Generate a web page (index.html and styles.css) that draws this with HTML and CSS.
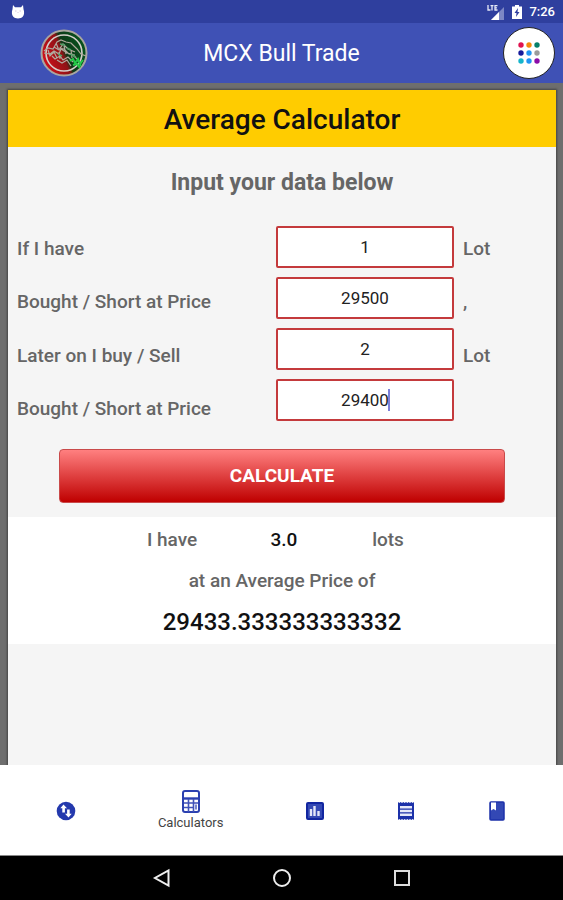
FILE: index.html
```html
<!DOCTYPE html>
<html lang="en">
<head>
<meta charset="utf-8">
<meta name="viewport" content="width=device-width, initial-scale=1">
<title>MCX Bull Trade</title>
<link rel="stylesheet" href="styles.css">
</head>
<body>
<div class="status-bar">
  <svg class="status-app" width="14" height="14" viewBox="0 0 14 14" aria-hidden="true">
    <path d="M2 0l2 2.200h6L12 0l.5 4.200c1 2.800.8 5.800-.8 7.600-1 1.200-2.600 1.700-4.700 1.700s-3.700-.5-4.700-1.700C.7 10 .5 7 1.500 4.200z" fill="#fff"/>
    <path d="M4 6h1.500M8.500 6H10M6.500 7.500h1" stroke="#d6c6df" stroke-width="1"/>
  </svg>
  <div class="status-icons">
    <svg width="18" height="16" viewBox="0 0 18 16" aria-hidden="true">
      <path d="M17 3v13H4z" fill="#7d87c4"/>
      <path d="M12 8v8H4z" fill="#fff"/>
      <path d="M1 1v5h2.500M3.500 1.600h3M5 1.600V6.500M10.500 1.600H8V6h2.500M8 3.800h2" fill="none" stroke="#e6e9f8" stroke-width="1.300"/>
    </svg>
    <svg width="10" height="14" viewBox="0 0 10 14" aria-hidden="true">
      <path d="M3 0h4v1.500h3V14H0V1.500h3z" fill="#fff"/>
      <path d="M6 3L2.500 8h2L4 12l3.500-5h-2z" fill="#303f9f"/>
    </svg>
    <span>7:26</span>
  </div>
</div>
<header class="app-bar">
  <svg class="logo" width="48" height="48" viewBox="0 0 48 48" role="img" aria-label="MCX Bull Trade logo">
    <defs>
      <linearGradient id="coin" x1="0" y1=".7" x2="1" y2=".3">
        <stop offset="0" stop-color="#d8101a"/>
        <stop offset=".46" stop-color="#8e1216"/>
        <stop offset=".54" stop-color="#0c3a18"/>
        <stop offset="1" stop-color="#06551c"/>
      </linearGradient>
    </defs>
    <circle cx="24" cy="24" r="22.500" fill="url(#coin)" stroke="#a9a6a0" stroke-width="2"/>
    <circle cx="24" cy="24" r="18" fill="none" stroke="#d5cfca" stroke-width="1.600"/>
    <path d="M4 22l4-3 5 1 4-7 4-2 5 2 5 1 6 6 4 5 5 2M4 24l6 1 4-3 5 3 2-5 6 4 5 1 5 5M12 27l3 3 5-3 3 4 5-3 5 5M16 14l2 5 6 1 5 5 6 1M14 18l5 3 4-6 5 5 7 3M17 31l5 3 5-3 4 6M8 21l2 6 4-4 3 6M19 23l1 7M24 17l2 8M31 21l1 8" fill="none" stroke="#b0a89c" stroke-width="1.200"/>
    <path d="M30 32l3-2 2 4 3-4 2 5 3-4M33 36l4-1 3 4M38 31l3 6" fill="none" stroke="#25c848" stroke-width="2"/>
    <path d="M18 25l4 2M20 15l5 1M30 25l6 3M27 19l4 2" stroke="#52a067" stroke-width="1.500"/>
  </svg>
  <h1 class="app-name">MCX Bull Trade</h1>
  <button class="apps-button" type="button" aria-label="All tools">
    <svg width="22" height="22" viewBox="0 0 22 22" aria-hidden="true">
      <circle cx="3" cy="3" r="2.700" fill="#e0124f"/><circle cx="11" cy="3" r="2.700" fill="#f58a0b"/><circle cx="19" cy="3" r="2.700" fill="#06806a"/>
      <circle cx="3" cy="11" r="2.700" fill="#171b9b"/><circle cx="11" cy="11" r="2.700" fill="#2196f3"/><circle cx="19" cy="11" r="2.700" fill="#9b9b9b"/>
      <circle cx="3" cy="19" r="2.700" fill="#15b5cb"/><circle cx="11" cy="19" r="2.700" fill="#2196f3"/><circle cx="19" cy="19" r="2.700" fill="#8b0ca8"/>
    </svg>
  </button>
</header>
<main class="page">
  <section class="card">
    <h2 class="card-title">Average Calculator</h2>
    <form class="form">
      <p class="hint">Input your data below</p>
      <div class="fields">
        <div class="labels">
          <label for="lots-held">If I have</label>
          <label for="price-held">Bought / Short at Price</label>
          <label for="lots-new">Later on I buy / Sell</label>
          <label for="price-new">Bought / Short at Price</label>
        </div>
        <div class="inputs">
          <input id="lots-held" type="text" inputmode="numeric" value="1">
          <input id="price-held" type="text" inputmode="numeric" value="29500">
          <input id="lots-new" type="text" inputmode="numeric" value="2">
          <div class="active-field">
            <input id="price-new" type="text" inputmode="numeric" value="29400">
            <span class="caret"></span>
          </div>
        </div>
        <div class="labels">
          <span>Lot</span>
          <span>,</span>
          <span>Lot</span>
          <span class="no-unit"></span>
        </div>
      </div>
      <button class="calculate" type="button">CALCULATE</button>
    </form>
    <div class="result">
      <div class="result-lots">
        <span>I have</span>
        <output class="strong">3.0</output>
        <span>lots</span>
      </div>
      <p class="result-text">at an Average Price of</p>
      <output class="result-price">29433.333333333332</output>
    </div>
  </section>
</main>
<nav class="tabs">
  <a class="tab" href="#rates" aria-label="Rates">
    <svg width="20" height="20" viewBox="0 0 20 20" aria-hidden="true">
      <circle cx="10" cy="10" r="9.300" fill="#2439ad"/>
      <path d="M7.500 3.500L4.300 7.200h2v4.300h2.600V7.200H11zM12.500 16.500l3.200-3.700h-2V8.500h-2.600v4.300H9z" fill="#fff"/>
    </svg>
  </a>
  <a class="tab tab-active" href="#calculators">
    <svg width="18" height="23" viewBox="0 0 18 23" aria-hidden="true">
      <rect x="1" y="1" width="16" height="21" rx="2" fill="#fff" stroke="#2b40b0" stroke-width="2"/>
      <path d="M2 8.500h14" stroke="#2b40b0" stroke-width="2.400"/>
      <path d="M2 13h14M2 17.500h9M6.500 9v13M11.500 9v13" stroke="#4052b8" stroke-width="1.600"/>
      <path d="M14 14.500v5" stroke="#4052b8" stroke-width="1.400"/>
    </svg>
    <span>Calculators</span>
  </a>
  <a class="tab" href="#charts" aria-label="Charts">
    <svg width="18" height="18" viewBox="0 0 18 18" aria-hidden="true">
      <rect x="1" y="1" width="16" height="16" rx="1" fill="#3449b4" stroke="#1226a0" stroke-width="2"/>
      <path d="M5 7v7M8.500 4v10M12.500 9v5" stroke="#e4e7f8" stroke-width="2.400"/>
    </svg>
  </a>
  <a class="tab" href="#reports" aria-label="Reports">
    <svg width="18" height="18" viewBox="0 0 18 18" aria-hidden="true">
      <path d="M1 0l1.300 1L3.700 0 5 1l1.300-1 1.400 1L9 0l1.300 1 1.400-1L13 1l1.300-1 1.400 1L17 0v18l-1.300-1-1.400 1-1.300-1-1.300 1-1.400-1L9 18l-1.300-1-1.400 1L5 17l-1.300 1-1.400-1L1 18z" fill="#1c31a9"/>
      <path d="M3 5.200h12M3 9h12M3 12.800h12" stroke="#e4e7f8" stroke-width="2.400"/>
    </svg>
  </a>
  <a class="tab" href="#guide" aria-label="Guide">
    <svg width="16" height="20" viewBox="0 0 16 20" aria-hidden="true">
      <rect x="1" y="1" width="14" height="18" rx="1" fill="#3348b5" stroke="#1c31a9" stroke-width="1.500"/>
      <path d="M2 1.500h5v8L4.500 8 2 9.500z" fill="#fff"/>
    </svg>
  </a>
</nav>
<div class="system-bar">
  <button type="button" aria-label="Back"><svg width="20" height="20" viewBox="0 0 20 20"><path d="M16.500 2.500v15L3 10z" fill="none" stroke="#eee" stroke-width="2"/></svg></button>
  <button type="button" aria-label="Home"><svg width="20" height="20" viewBox="0 0 20 20"><circle cx="10" cy="10" r="8" fill="none" stroke="#eee" stroke-width="2"/></svg></button>
  <button type="button" aria-label="Recent apps"><svg width="20" height="20" viewBox="0 0 20 20"><rect x="3" y="3" width="14" height="14" fill="none" stroke="#ddd" stroke-width="2"/></svg></button>
</div>
</body>
</html>
```
FILE: styles.css
```css
* {
  box-sizing: border-box;
}

body {
  margin: 0;
  min-height: 100vh;
  display: flex;
  flex-direction: column;
  font-family: Roboto, "Liberation Sans", sans-serif;
  font-size: 19px;
  line-height: 22px;
  color: #666;
  background: #6e6e6e;
}

h1, h2, p {
  margin: 0;
}

svg {
  display: block;
}

button {
  font: inherit;
  border: 0;
  padding: 0;
  cursor: pointer;
}

.status-bar {
  height: 23px;
  padding: 0 8px 0 11px;
  display: flex;
  align-items: center;
  justify-content: space-between;
  color: #fff;
  background: #2f3f9e;
}

.status-icons {
  display: flex;
  align-items: center;
  gap: 7px;
  font-size: 13px;
  font-weight: 500;
}

.app-bar {
  height: 60px;
  padding: 0 8px 0 40px;
  display: grid;
  grid-template-columns: 52px 1fr 52px;
  align-items: center;
  color: #fff;
  background: #3f51b5;
}

.app-name {
  padding: 2px 32px 0 0;
  font-size: 23px;
  font-weight: 400;
  line-height: 30px;
  text-align: center;
}

.apps-button {
  width: 52px;
  height: 52px;
  display: grid;
  place-items: center;
  border: 1px solid #222;
  border-radius: 50%;
  background: #fff;
}

.page {
  flex: 1;
  display: flex;
  padding: 7px 7px 0 8px;
  background: #6e6e6e;
}

.card {
  flex: 1;
  background: #f5f5f5;
  box-shadow: 0 0 2px 1px #444;
}

.card-title {
  padding: 14px 0 11px;
  font-size: 28px;
  font-weight: 500;
  line-height: 32px;
  text-align: center;
  color: #111;
  background: #ffcc00;
}

.form {
  padding: 20px 0 14px;
}

.hint {
  font-size: 23px;
  font-weight: 700;
  line-height: 32px;
  text-align: center;
}

.fields {
  display: grid;
  grid-template-columns: 250fr 178fr 83fr;
  column-gap: 9px;
  padding: 27px 10px 28px 9px;
  font-weight: 500;
}

.labels {
  display: flex;
  flex-direction: column;
  justify-content: space-between;
  padding: 12px 0 1px;
}

.no-unit {
  height: 22px;
}

.inputs {
  display: grid;
  gap: 9px;
}

.inputs input {
  display: block;
  width: 100%;
  height: 42px;
  padding: 0;
  border: 2px solid #c43a3c;
  border-radius: 2px;
  font: 400 17px/22px Roboto, "Liberation Sans", sans-serif;
  text-align: center;
  color: #222;
  background: #fff;
  outline: 0;
}

.active-field {
  position: relative;
}

.caret {
  position: absolute;
  top: 10px;
  left: calc(50% + 23px);
  width: 2px;
  height: 22px;
  background: #7b7fd8;
}

.calculate {
  display: block;
  width: calc(100% - 102px);
  height: 54px;
  margin: 0 auto;
  border: 1px solid #c94a4a;
  border-radius: 4px;
  font-weight: 700;
  color: #fff;
  background: linear-gradient(#ff8080, #bf0000);
}

.result {
  padding: 12px 0 8px;
  text-align: center;
  font-weight: 500;
  background: #fff;
}

.result-lots {
  display: grid;
  grid-template-columns: repeat(3, 104px);
  justify-content: center;
  padding-right: 12px;
}

.strong {
  padding-left: 16px;
  color: #111;
}

.result-lots span:last-child {
  padding-left: 16px;
}

.result-text {
  padding: 19px 0 16px;
}

.result-price {
  display: block;
  font-size: 24px;
  line-height: 28px;
  color: #111;
}

.tabs {
  height: 91px;
  padding: 0 21px;
  display: grid;
  grid-template-columns: 91fr 158fr 91fr 91fr 91fr;
  align-items: center;
  border-bottom: 1px solid #888;
  background: #fff;
}

.tab {
  display: flex;
  flex-direction: column;
  align-items: center;
  gap: 2px;
  padding-top: 1px;
  font-size: 13px;
  line-height: 16px;
  color: #444;
  text-decoration: none;
}

.system-bar {
  height: 44px;
  display: flex;
  align-items: center;
  justify-content: center;
  gap: 100px;
  background: #000;
}

.system-bar button {
  background: none;
}
```
